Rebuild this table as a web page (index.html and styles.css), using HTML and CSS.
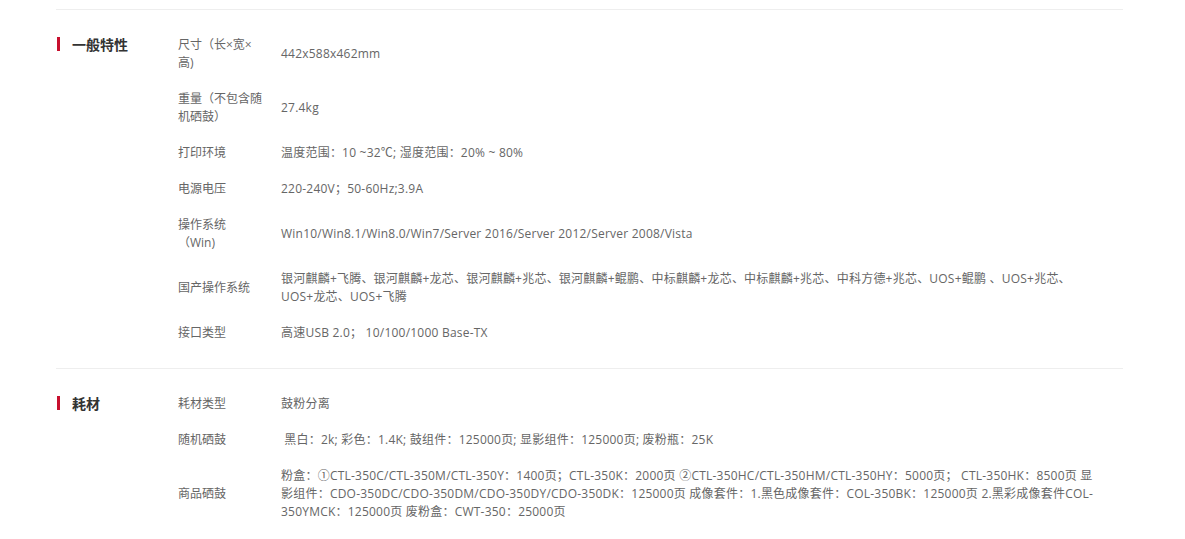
FILE: index.html
```html
<!DOCTYPE html>
<html lang="zh-CN">
<head>
<meta charset="utf-8">
<title>规格参数</title>
<link rel="stylesheet" href="styles.css">
</head>
<body>
<div class="specs">
  <section class="group">
    <h3 class="group-title"><span class="mark"></span>一般特性</h3>
    <div class="rows">
      <div class="row"><div class="label">尺寸（长×宽×高)</div><div class="value">442x588x462mm</div></div>
      <div class="row"><div class="label">重量（不包含随机硒鼓）</div><div class="value">27.4kg</div></div>
      <div class="row"><div class="label">打印环境</div><div class="value">温度范围：10 ~32℃; 湿度范围：20% ~ 80%</div></div>
      <div class="row"><div class="label">电源电压</div><div class="value">220-240V；50-60Hz;3.9A</div></div>
      <div class="row"><div class="label">操作系统（Win)</div><div class="value">Win10/Win8.1/Win8.0/Win7/Server 2016/Server 2012/Server 2008/Vista</div></div>
      <div class="row"><div class="label">国产操作系统</div><div class="value">银河麒麟+飞腾、银河麒麟+龙芯、银河麒麟+兆芯、银河麒麟+鲲鹏、中标麒麟+龙芯、中标麒麟+兆芯、中科方德+兆芯、UOS+鲲鹏 、UOS+兆芯、UOS+龙芯、UOS+飞腾</div></div>
      <div class="row"><div class="label">接口类型</div><div class="value">高速USB 2.0； 10/100/1000 Base-TX</div></div>
    </div>
  </section>
  <section class="group">
    <h3 class="group-title"><span class="mark"></span>耗材</h3>
    <div class="rows">
      <div class="row"><div class="label">耗材类型</div><div class="value">鼓粉分离</div></div>
      <div class="row"><div class="label">随机硒鼓</div><div class="value">&nbsp;黑白：2k; 彩色：1.4K; 鼓组件：125000页; 显影组件：125000页; 废粉瓶：25K</div></div>
      <div class="row"><div class="label">商品硒鼓</div><div class="value">粉盒：①CTL-350C/CTL-350M/CTL-350Y：1400页；CTL-350K：2000页 ②CTL-350HC/CTL-350HM/CTL-350HY：5000页； CTL-350HK：8500页 显影组件：CDO-350DC/CDO-350DM/CDO-350DY/CDO-350DK：125000页 成像套件：1.黑色成像套件：COL-350BK：125000页 2.黑彩成像套件COL-350YMCK：125000页 废粉盒：CWT-350：25000页</div></div>
    </div>
  </section>
</div>
</body>
</html>
```
FILE: styles.css
```css
* { box-sizing: border-box; }
html, body { margin: 0; padding: 0; background: #fff; }
body {
  font-family: "Open Sans", "Noto Sans CJK SC", sans-serif;
  font-size: 12px;
  color: #666;
}
.specs {
  margin: 0 62px 0 56px;
  padding-top: 9px;
}
.group {
  display: flex;
  align-items: flex-start;
  border-top: 1px solid #eeeeee;
  padding: 17px 0 17px;
}
.group-title {
  width: 122px;
  flex: none;
  margin: 0;
  padding-top: 8px;
  display: flex;
  align-items: center;
  font-family: "Noto Sans CJK SC", sans-serif;
  font-size: 14px;
  font-weight: bold;
  color: #333;
  line-height: 18px;
}
.mark {
  width: 3px;
  height: 14px;
  background: #c8102e;
  margin-left: 1px;
  margin-right: 12px;
}
.rows { flex: 1; }
.row {
  display: flex;
  align-items: center;
  padding: 9px 0;
  line-height: 18px;
}
.label {
  width: 84px;
  flex: none;
  margin-right: 19px;
  color: #666;
}
.value {
  flex: 1;
  padding-right: 21px;
  letter-spacing: 0.22px;
  color: #666;
}
```
